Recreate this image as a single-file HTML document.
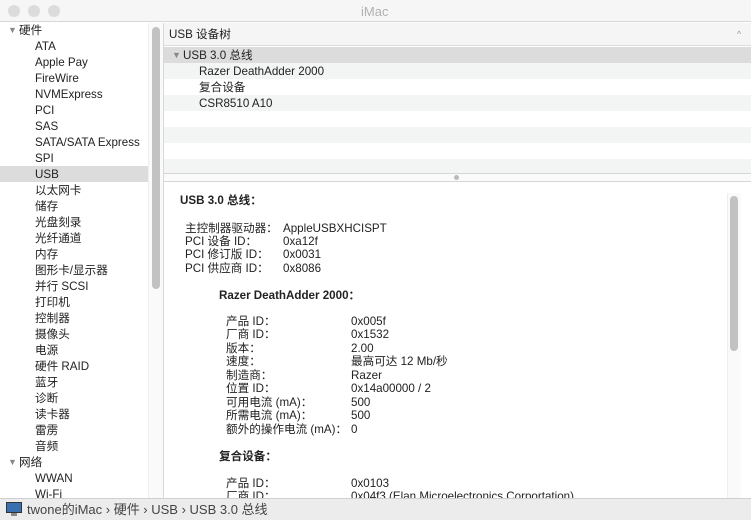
<!DOCTYPE html>
<html><head><meta charset="utf-8"><style>
*{margin:0;padding:0;box-sizing:border-box}
body{width:751px;height:520px;overflow:hidden;background:#fff;font-family:"Liberation Sans","Noto Sans CJK SC",sans-serif;font-size:11.6px;color:#222;position:relative}
.a{position:absolute;white-space:nowrap;line-height:13px}
.b{font-weight:bold}
.bx{position:absolute}
</style></head><body>
<div class="bx" style="left:0;top:0;width:751px;height:22px;background:#f6f6f6;border-bottom:1px solid #d6d6d6"></div>
<div class="bx" style="left:8px;top:5px;width:12px;height:12px;border-radius:6px;background:#dcdcdc"></div>
<div class="bx" style="left:28px;top:5px;width:12px;height:12px;border-radius:6px;background:#dcdcdc"></div>
<div class="bx" style="left:48px;top:5px;width:12px;height:12px;border-radius:6px;background:#dcdcdc"></div>
<div class="a" style="left:361px;top:5px;color:#b0b0b0;font-size:13px">iMac</div>

<!-- sidebar -->
<div class="bx" style="left:0;top:166px;width:148px;height:16px;background:#dcdcdc"></div>
<div class="bx" style="left:148px;top:23px;width:15px;height:475px;background:#fafafa;border-left:1px solid #eee"></div>
<div class="bx" style="left:152px;top:27px;width:8px;height:262px;border-radius:4px;background:#c2c2c2"></div>
<div class="bx" style="left:163px;top:23px;width:1px;height:475px;background:#d8d8d8"></div>
<div class="a" style="left:8px;top:24px;color:#888;font-size:9px">▼</div><div class="a" style="left:19px;top:24px">硬件</div>
<div class="a" style="left:35px;top:40px">ATA</div>
<div class="a" style="left:35px;top:56px">Apple Pay</div>
<div class="a" style="left:35px;top:72px">FireWire</div>
<div class="a" style="left:35px;top:88px">NVMExpress</div>
<div class="a" style="left:35px;top:104px">PCI</div>
<div class="a" style="left:35px;top:120px">SAS</div>
<div class="a" style="left:35px;top:136px">SATA/SATA Express</div>
<div class="a" style="left:35px;top:152px">SPI</div>
<div class="a" style="left:35px;top:168px">USB</div>
<div class="a" style="left:35px;top:184px">以太网卡</div>
<div class="a" style="left:35px;top:200px">储存</div>
<div class="a" style="left:35px;top:216px">光盘刻录</div>
<div class="a" style="left:35px;top:232px">光纤通道</div>
<div class="a" style="left:35px;top:248px">内存</div>
<div class="a" style="left:35px;top:264px">图形卡/显示器</div>
<div class="a" style="left:35px;top:280px">并行 SCSI</div>
<div class="a" style="left:35px;top:296px">打印机</div>
<div class="a" style="left:35px;top:312px">控制器</div>
<div class="a" style="left:35px;top:328px">摄像头</div>
<div class="a" style="left:35px;top:344px">电源</div>
<div class="a" style="left:35px;top:360px">硬件 RAID</div>
<div class="a" style="left:35px;top:376px">蓝牙</div>
<div class="a" style="left:35px;top:392px">诊断</div>
<div class="a" style="left:35px;top:408px">读卡器</div>
<div class="a" style="left:35px;top:424px">雷雳</div>
<div class="a" style="left:35px;top:440px">音频</div>
<div class="a" style="left:8px;top:456px;color:#888;font-size:9px">▼</div><div class="a" style="left:19px;top:456px">网络</div>
<div class="a" style="left:35px;top:472px">WWAN</div>
<div class="a" style="left:35px;top:488px">Wi-Fi</div>

<!-- tree -->
<div class="bx" style="left:164px;top:23px;width:587px;height:23px;background:#f5f5f5;border-bottom:1px solid #dcdcdc"></div>
<div class="a" style="left:169px;top:28px">USB 设备树</div>
<div class="a" style="left:737px;top:28px;color:#999;font-size:9px">^</div>
<div class="bx" style="left:164px;top:47px;width:587px;height:16px;background:#dcdcdc"></div>
<div class="bx" style="left:164px;top:63px;width:587px;height:16px;background:#f3f4f4"></div>
<div class="bx" style="left:164px;top:95px;width:587px;height:16px;background:#f3f4f4"></div>
<div class="bx" style="left:164px;top:127px;width:587px;height:16px;background:#f3f4f4"></div>
<div class="bx" style="left:164px;top:159px;width:587px;height:14px;background:#f3f4f4"></div>
<div class="a" style="left:172px;top:49px;color:#888;font-size:9px">▼</div><div class="a" style="left:183px;top:49px">USB 3.0 总线</div>
<div class="a" style="left:199px;top:65px">Razer DeathAdder 2000</div>
<div class="a" style="left:199px;top:81px">复合设备</div>
<div class="a" style="left:199px;top:97px">CSR8510 A10</div>
<div class="bx" style="left:164px;top:173px;width:587px;height:9px;background:#fafafa;border-top:1px solid #d6d6d6;border-bottom:1px solid #d6d6d6"></div>
<div class="bx" style="left:454px;top:175px;width:5px;height:5px;border-radius:3px;background:#bbb"></div>

<!-- detail -->
<div class="bx" style="left:727px;top:193px;width:14px;height:305px;background:#fafafa;border-left:1px solid #eee"></div>
<div class="bx" style="left:730px;top:196px;width:8px;height:155px;border-radius:4px;background:#c2c2c2"></div>
<div class="a b" style="left:180px;top:194px">USB 3.0 总线：</div>
<div class="a" style="left:185px;top:222px">主控制器驱动器：</div><div class="a" style="left:283px;top:222px">AppleUSBXHCISPT</div>
<div class="a" style="left:185px;top:235px">PCI 设备 ID：</div><div class="a" style="left:283px;top:235px">0xa12f</div>
<div class="a" style="left:185px;top:248px">PCI 修订版 ID：</div><div class="a" style="left:283px;top:248px">0x0031</div>
<div class="a" style="left:185px;top:262px">PCI 供应商 ID：</div><div class="a" style="left:283px;top:262px">0x8086</div>
<div class="a b" style="left:219px;top:289px">Razer DeathAdder 2000：</div>
<div class="a" style="left:226px;top:315px">产品 ID：</div><div class="a" style="left:351px;top:315px">0x005f</div>
<div class="a" style="left:226px;top:328px">厂商 ID：</div><div class="a" style="left:351px;top:328px">0x1532</div>
<div class="a" style="left:226px;top:342px">版本：</div><div class="a" style="left:351px;top:342px">2.00</div>
<div class="a" style="left:226px;top:355px">速度：</div><div class="a" style="left:351px;top:355px">最高可达 12 Mb/秒</div>
<div class="a" style="left:226px;top:369px">制造商：</div><div class="a" style="left:351px;top:369px">Razer</div>
<div class="a" style="left:226px;top:382px">位置 ID：</div><div class="a" style="left:351px;top:382px">0x14a00000 / 2</div>
<div class="a" style="left:226px;top:396px">可用电流 (mA)：</div><div class="a" style="left:351px;top:396px">500</div>
<div class="a" style="left:226px;top:409px">所需电流 (mA)：</div><div class="a" style="left:351px;top:409px">500</div>
<div class="a" style="left:226px;top:423px">额外的操作电流 (mA)：</div><div class="a" style="left:351px;top:423px">0</div>
<div class="a b" style="left:219px;top:450px">复合设备：</div>
<div class="a" style="left:226px;top:477px">产品 ID：</div><div class="a" style="left:351px;top:477px">0x0103</div>
<div class="a" style="left:226px;top:490px">厂商 ID：</div><div class="a" style="left:351px;top:490px">0x04f3  (Elan Microelectronics Corportation)</div>

<!-- bottom -->
<div class="bx" style="left:0;top:498px;width:751px;height:22px;background:#ececec;border-top:1px solid #d0d0d0"></div>
<div class="bx" style="left:6px;top:502px;width:16px;height:11px;background:#3a6fb0;border:1px solid #333"></div>
<div class="bx" style="left:11px;top:513px;width:6px;height:3px;background:#888"></div>
<div class="a" style="left:27px;top:503px;font-size:13px;color:#444">twone的iMac › 硬件 › USB › USB 3.0 总线</div>
</body></html>
